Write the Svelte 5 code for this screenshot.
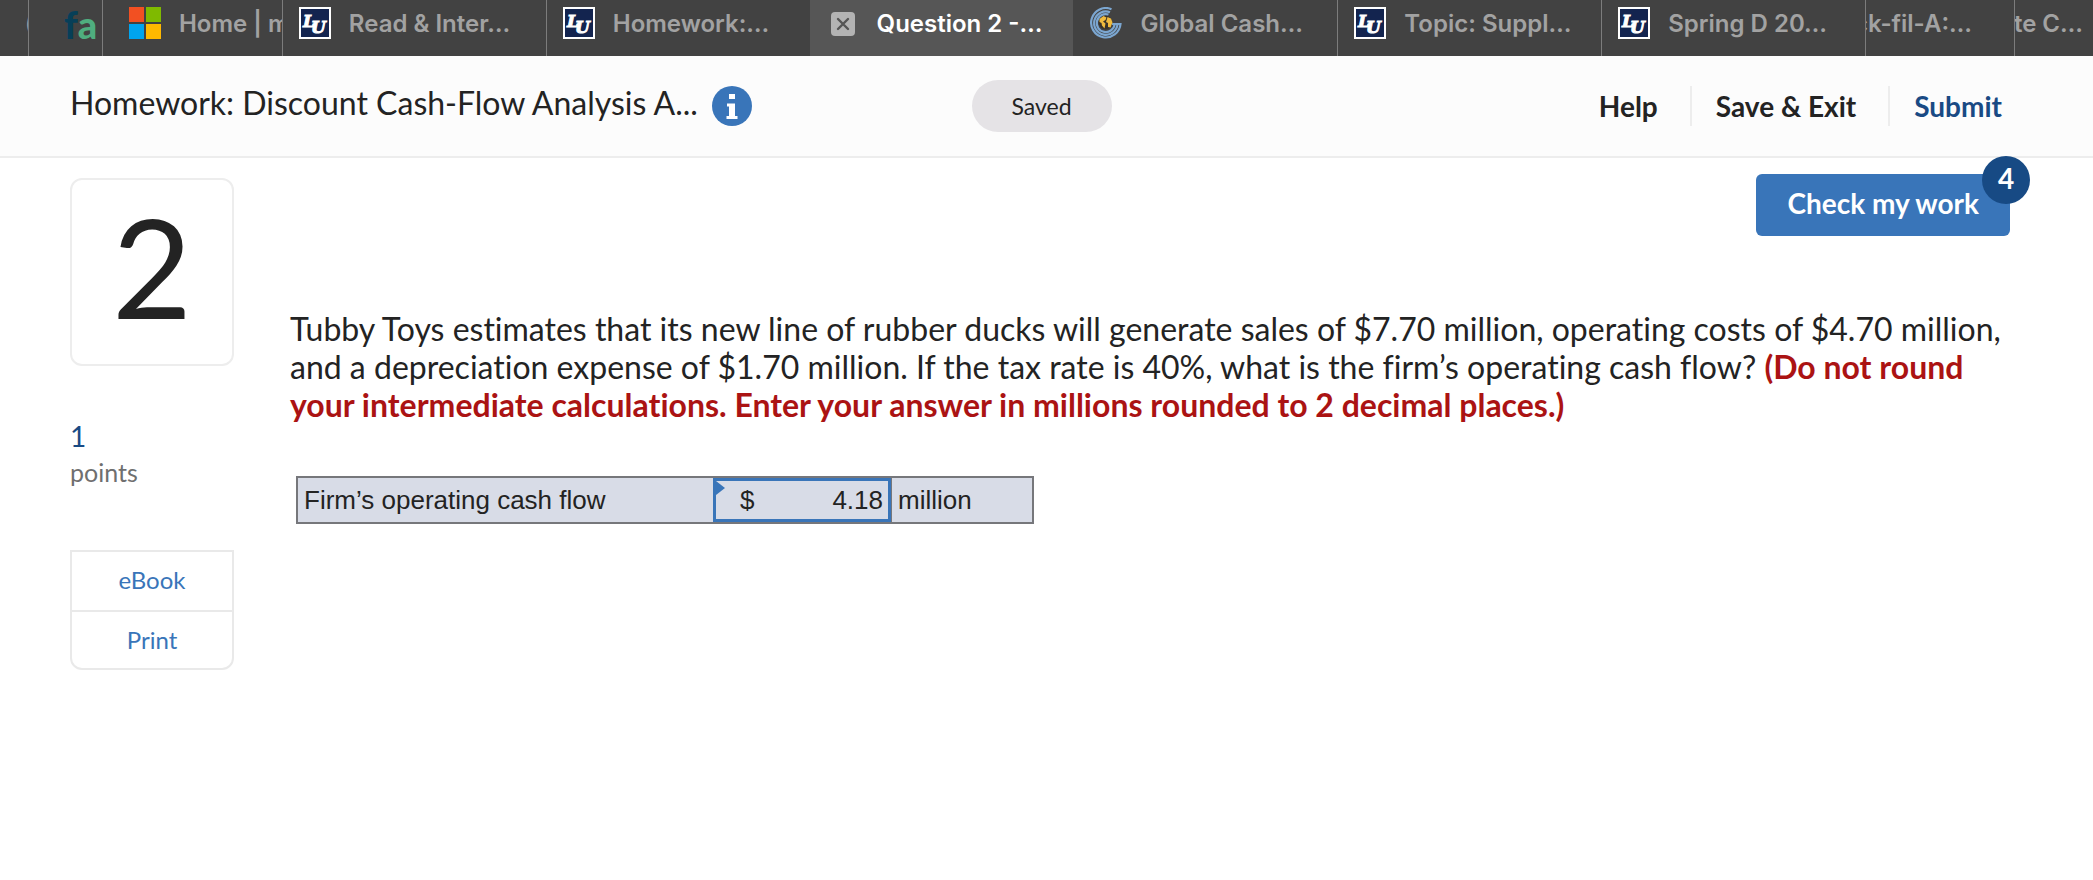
<script lang="ts">
	type Tab = { title: string; icon?: string; kind?: string };

	const tabs: Tab[] = [
		{ title: '(', kind: 'sliver' },
		{ title: '', icon: 'fa', kind: 'small' },
		{ title: 'Home | m', icon: 'windows' },
		{ title: 'Read & Inter…', icon: 'lu' },
		{ title: 'Homework:…', icon: 'lu' },
		{ title: 'Question 2 -…', icon: 'close', kind: 'active' },
		{ title: 'Global Cash…', icon: 'globe' },
		{ title: 'Topic: Suppl…', icon: 'lu' },
		{ title: 'Spring D 20…', icon: 'lu' },
		{ title: 'ck-fil-A:…', kind: 'stacked' },
		{ title: 'te C…', kind: 'stacked last' }
	];

	let answer = $state('4.18');
</script>

<nav class="tabs">
	{#each tabs as tab}
		<a class="tab {tab.kind ?? ''}" href="#top">
			{#if tab.icon === 'fa'}
				<span class="fa"><span class="fa__f">f</span>a</span>
			{:else if tab.icon === 'windows'}
				<svg class="tab__icon" viewBox="0 0 32 32">
					<rect width="15" height="15" fill="#f25022" />
					<rect x="17" width="15" height="15" fill="#7fba00" />
					<rect y="17" width="15" height="15" fill="#00a4ef" />
					<rect x="17" y="17" width="15" height="15" fill="#ffb900" />
				</svg>
			{:else if tab.icon === 'lu'}
				<svg class="tab__icon" viewBox="0 0 32 32">
					<rect width="32" height="32" fill="#fff" />
					<rect x="2" y="2" width="28" height="28" fill="#13244f" />
					<text class="lu" x="4" y="20">L<tspan dx="-3" dy="6">U</tspan></text>
				</svg>
			{:else if tab.icon === 'close'}
				<svg class="tab__icon" viewBox="0 0 32 32">
					<rect x="4" y="5" width="24" height="24" rx="4" fill="#b3b3b3" />
					<path d="M11 12 21 22M21 12 11 22" stroke="#555" stroke-width="2.4" stroke-linecap="round" />
				</svg>
			{:else if tab.icon === 'globe'}
				<svg class="tab__icon" viewBox="0 0 32 32" fill="none">
					<g stroke="#7ba6d0" stroke-width="2.2">
						<path d="M21.500 2.200A14.700 14.700 0 1 0 30.500 17H22" />
						<path d="M20 5.200A11.700 11.700 0 1 0 27.500 17" />
						<path d="M18.500 7.500A9 9 0 1 0 24.700 17" />
					</g>
					<circle cx="15.500" cy="15.500" r="6.800" fill="#38332a" />
					<path d="m9.500 12 4-3 3 1.500-1 2.500-2.500 1.500 2.500 2-1 5-2.500-3-.5-2.500-2-1zm8-2 3.500 1.500 1.500 4-2 5-2.500-.5v-4l-2-1 1-3z" fill="#efbb3e" />
				</svg>
			{/if}
			{#if tab.title}
				<span class="tab__title">{tab.title}</span>
			{/if}
		</a>
	{/each}
</nav>

<header class="header" id="top">
	<div class="header__left">
		<h1>Homework: Discount Cash-Flow Analysis A...</h1>
		<button class="info" aria-label="Assignment information">
			<svg viewBox="0 0 40 40">
				<circle cx="20" cy="20" r="20" fill="#3975b9" />
				<path d="M17 8h6v5h-6zM15 17.500h8v12.500h2.500v3h-11v-3H17v-9.500h-2z" fill="#fff" />
			</svg>
		</button>
	</div>
	<div class="saved">Saved</div>
	<div class="header__actions">
		<button>Help</button>
		<button>Save &amp; Exit</button>
		<button class="submit">Submit</button>
	</div>
</header>

<main class="page">
	<aside class="side">
		<div class="number">2</div>
		<div class="points">
			<span class="points__value">1</span>
			<span>points</span>
		</div>
		<div class="links">
			<a href="#ebook">eBook</a>
			<a href="#print">Print</a>
		</div>
	</aside>

	<section class="content">
		<button class="check">
			Check my work
			<span class="check__badge">4</span>
		</button>

		<p class="question">
			Tubby Toys estimates that its new line of rubber ducks will generate sales of $7.70 million, operating costs of $4.70 million, and a depreciation expense of $1.70 million. If the tax rate is 40%, what is the firm’s operating cash flow?
			<strong>(Do not round your intermediate calculations. Enter your answer in millions rounded to 2 decimal places.)</strong>
		</p>

		<table class="answer">
			<tbody>
				<tr>
					<th scope="row"><label for="cash-flow">Firm’s operating cash flow</label></th>
					<td class="answer__cell">
						<div class="answer__field">
							<span>$</span>
							<input id="cash-flow" type="text" bind:value={answer} />
						</div>
					</td>
					<td class="answer__unit">million</td>
				</tr>
			</tbody>
		</table>
	</section>
</main>

<style>
	:global(body) {
		background: #fff;
		color: #232323;
		font-family: Lato, 'Open Sans', sans-serif;
		font-variant-ligatures: none;
	}

	button {
		border: 0;
		padding: 0;
		background: none;
		color: inherit;
		font: inherit;
		cursor: pointer;
	}

	a {
		text-decoration: none;
	}

	.tabs {
		display: grid;
		grid-template-columns: 28fr 74fr 180fr repeat(6, 264fr) 149fr 79fr;
		height: 56px;
		background: #424242;
		font: 600 24px/34px Inter, sans-serif;
	}

	.tab {
		display: flex;
		gap: 18px;
		min-width: 0;
		box-sizing: border-box;
		padding: 7px 0 0 16px;
		overflow: hidden;
		white-space: nowrap;
		color: #a2a2a2;
		border-left: 1px solid #7c7c7c;
	}

	.tab:first-child,
	.tab.active,
	.tab.active + .tab {
		border-left-color: transparent;
	}

	.tab.active {
		background: #565656;
		color: #fff;
	}

	.tab.sliver {
		padding-left: 24px;
	}

	.tab.small {
		padding-left: 35px;
	}

	.tab:nth-child(3) {
		padding-left: 26px;
	}

	.tab.stacked {
		justify-content: flex-end;
		padding-right: 42px;
	}

	.tab.last {
		padding-right: 10px;
	}

	.tab__icon {
		flex: none;
		width: 32px;
		height: 32px;
	}

	.lu {
		fill: #fff;
		stroke: #fff;
		font: italic bold 17px 'DejaVu Serif', serif;
	}

	.fa {
		color: #4fae7f;
		font: 900 38px/34px Lato, sans-serif;
	}

	.fa__f {
		color: #073f58;
	}

	.header {
		display: grid;
		grid-template-columns: 1fr auto 1fr;
		align-items: center;
		height: 100px;
		padding: 0 80px 0 70px;
		background: #fcfcfc;
		border-bottom: 2px solid #ededed;
	}

	.header__left {
		display: flex;
		align-items: center;
		gap: 14px;
	}

	h1 {
		margin: 0;
		padding-bottom: 6px;
		font-size: 32px;
		font-weight: 400;
		line-height: 40px;
		white-space: nowrap;
	}

	.info,
	.info svg {
		display: block;
		width: 40px;
		height: 40px;
	}

	.saved {
		width: 140px;
		border-radius: 26px;
		background: #e5e3e6;
		font-size: 23px;
		line-height: 52px;
		text-align: center;
	}

	.header__actions {
		display: flex;
		justify-content: flex-end;
		padding-right: 11px;
		font-size: 28px;
		font-weight: 700;
		line-height: 40px;
		white-space: nowrap;
	}

	.header__actions button + button {
		margin-left: 32px;
		padding-left: 24px;
		border-left: 2px solid #ededed;
	}

	.header__actions .submit {
		color: #194a84;
	}

	.page {
		display: flex;
		gap: 56px;
		padding: 16px 83px 40px 70px;
	}

	.side {
		flex: none;
		width: 164px;
		padding-top: 4px;
	}

	.number {
		padding-bottom: 12px;
		border: 2px solid #ededed;
		border-radius: 12px;
		font-size: 138px;
		line-height: 172px;
		text-align: center;
	}

	.points {
		display: flex;
		flex-direction: column;
		margin-top: 52px;
		color: #6f6f6f;
		font-size: 25px;
		line-height: 36px;
	}

	.points__value {
		color: #194a84;
		font-size: 28px;
	}

	.links {
		margin-top: 60px;
		border: 2px solid #e9e9e9;
		border-radius: 0 0 12px 12px;
		font-size: 24px;
		line-height: 56px;
		text-align: center;
	}

	.links a {
		display: block;
		color: #3975b9;
	}

	.links a + a {
		margin-top: 2px;
		border-top: 2px solid #e9e9e9;
	}

	.content {
		display: flex;
		flex: 1;
		flex-direction: column;
		min-width: 0;
	}

	.check {
		position: relative;
		align-self: flex-end;
		padding: 0 31px 4px;
		border-radius: 6px;
		background: #3975b9;
		color: #fff;
		font-size: 28px;
		font-weight: 700;
		line-height: 58px;
	}

	.check__badge {
		position: absolute;
		top: -18px;
		right: -20px;
		width: 48px;
		padding-bottom: 4px;
		border-radius: 50%;
		background: #174a84;
		line-height: 44px;
		text-align: center;
	}

	.question {
		margin: 74px 0 52px;
		font-size: 32px;
		line-height: 38px;
	}

	.question strong {
		color: #ab1313;
	}

	.answer {
		width: 738px;
		margin-left: 6px;
		border: 2px solid #76777b;
		border-collapse: separate;
		border-spacing: 0;
		table-layout: fixed;
		background: #d8dce7;
		font: 26px/44px 'Liberation Sans', Arial, sans-serif;
	}

	.answer th,
	.answer td {
		padding: 0;
		font-weight: 400;
		text-align: left;
	}

	.answer th {
		width: 409px;
		padding-left: 6px;
		white-space: nowrap;
	}

	.answer__cell {
		position: relative;
		width: 178px;
	}

	/* corner flag that marks an answered cell */
	.answer__cell::before {
		content: '';
		position: absolute;
		top: 3px;
		left: 3px;
		border: 7px solid transparent;
		border-width: 7px 0 7px 9px;
		border-left-color: #3975b9;
	}

	.answer__field {
		display: flex;
		justify-content: space-between;
		box-sizing: border-box;
		height: 44px;
		padding: 0 5px 0 24px;
		border: 3px solid #3975b9;
		line-height: 38px;
	}

	.answer__field input {
		width: 110px;
		padding: 0;
		border: 0;
		outline: 0;
		background: none;
		color: inherit;
		font: inherit;
		text-align: right;
	}

	.answer .answer__unit {
		padding-left: 6px;
		border-left: 1px solid #76777b;
	}
</style>
